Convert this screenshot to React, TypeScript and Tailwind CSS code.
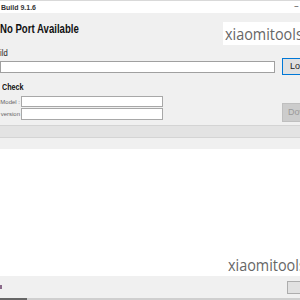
export default function App() {
  return (
    <div className="w-[300px] h-[300px] overflow-hidden bg-[#f0f0f0] flex flex-col" style={{ fontFamily: '"Liberation Sans", Arial, sans-serif' }}>
      {/* title bar */}
      <div className="h-[13px] shrink-0 bg-white flex items-center justify-between border-t border-[#d9d9d9]">
        <span className="pl-[1px] text-[7px] font-semibold text-[#333] leading-none">Build 9.1.6</span>
        <span className="pr-[1px] text-[8px] text-[#333] leading-none">−</span>
      </div>
      {/* header */}
      <div className="mt-[9px] h-[23px] shrink-0 flex items-start justify-between">
        <span className="inline-block origin-left scale-x-[0.8] mt-[1px] text-[12px] font-bold text-[#111] leading-[12px] whitespace-nowrap">No Port Available</span>
        <div className="w-[77px] h-[23px] bg-white overflow-hidden flex items-center pl-[2px]">
          <span className="inline-block origin-left scale-x-[0.9] text-[16px] text-[#666] leading-none whitespace-nowrap" style={{ fontFamily: '"Open Sans", sans-serif' }}>xiaomitools</span>
        </div>
      </div>
      {/* build label */}
      <div className="mt-[4px] h-[9px] text-[9px] leading-[9px] text-[#222]">
        <span className="inline-block origin-left scale-x-[0.85]">ild</span>
      </div>
      {/* input row */}
      <div className="h-[17px] shrink-0 flex items-center">
        <div className="w-[275px] h-[12px] bg-white border border-[#a0a0a0] shrink-0" />
        <div className="ml-[7px] w-[40px] h-[17px] shrink-0 bg-[#e1e1e1] border border-[#0078d7] flex items-center pl-[7px]">
          <span className="text-[9px] text-[#222] leading-none">Load</span>
        </div>
      </div>
      {/* check section */}
      <div className="mt-[8px] pl-[2px] h-[9px] text-[9px] font-bold leading-[9px] text-[#111]">
        <span className="inline-block origin-left scale-x-[0.8]">Check</span>
      </div>
      <div className="mt-[4px] flex items-start">
        <div className="flex flex-col gap-[1px]">
          <div className="flex items-center h-[11px]">
            <span className="w-[21px] text-right pr-[1px] text-[6px] text-[#666] leading-none whitespace-nowrap">Model :</span>
            <div className="w-[142px] h-[11px] bg-white border border-[#a8a8a8]" />
          </div>
          <div className="flex items-center h-[12px]">
            <span className="w-[21px] text-right pr-[1px] text-[6px] text-[#666] leading-none whitespace-nowrap">version</span>
            <div className="w-[142px] h-[12px] bg-white border border-[#a8a8a8]" />
          </div>
        </div>
        <div className="ml-[119px] mt-[7px] w-[40px] h-[19px] shrink-0 bg-[#cccccc] border border-[#bfbfbf] flex items-center pl-[5px]">
          <span className="text-[9px] text-[#9a9a9a] leading-none">Download</span>
        </div>
      </div>
      {/* strip */}
      <div className="mt-[3px] h-[13px] shrink-0 bg-[#e3e3e3] border-y border-[#d4d4d4]" />
      <div className="h-[11px] shrink-0" />
      {/* white log area */}
      <div className="flex-1 bg-white flex items-end justify-start pl-[228px] pb-[3px] overflow-hidden">
        <span className="inline-block origin-left scale-x-[0.9] text-[16px] text-[#666] leading-none whitespace-nowrap" style={{ fontFamily: '"Open Sans", sans-serif' }}>xiaomitools</span>
      </div>
      {/* bottom bar */}
      <div className="h-[22px] shrink-0 flex items-center justify-between">
        <div className="w-[2px] h-[4px] bg-[#8a6a8a]" />
        <div className="w-[20px] h-[13px] bg-[#e1e1e1] border border-[#adadad] -mr-[7px]" />
      </div>
      <div className="h-[2px] shrink-0 flex">
        <div className="w-[27px] bg-[#666]" />
        <div className="flex-1 bg-[#cfcfcf]" />
      </div>
    </div>
  );
}
